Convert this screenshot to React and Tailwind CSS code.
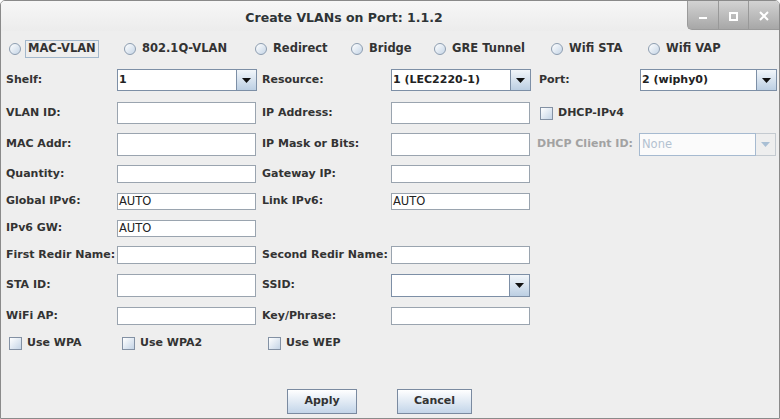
import React from "react";

const label = "font-bold text-[11px] text-[#333333] whitespace-nowrap";

function TextField({ value, w = "w-[139px]" }) {
  return (
    <div className={`${w} shrink-0 h-full bg-white border border-[#9aa4af] flex items-center pl-[1px] text-[11.5px] text-[#222] overflow-hidden`}>
      {value}
    </div>
  );
}

function Arrow({ disabled }) {
  return (
    <div className={`w-[20px] h-full flex items-center justify-center ${disabled ? "border border-l-0 border-[#c4cad0] bg-[#eeeeee]" : "border-l border-[#7d8fa6] bg-gradient-to-b from-[#f2f6fa] to-[#bccfe3]"}`}>
      <svg width="9" height="5" viewBox="0 0 9 5">
        <path d="M0 0h9L4.5 5z" fill={disabled ? "#a9bfd4" : "#111"} />
      </svg>
    </div>
  );
}

function Combo({ value, w = "w-[140px]" }) {
  return (
    <div className={`${w} shrink-0 h-full flex border border-[#7d8fa6] bg-white`}>
      <div className="flex-1 flex items-center pl-[1px] font-bold text-[11px] text-[#222]">{value}</div>
      <Arrow />
    </div>
  );
}

function DisabledCombo({ value, w }) {
  return (
    <div className={`${w} shrink-0 h-full flex`}>
      <div className="flex-1 flex items-center pl-[2px] border border-[#a6bad0] bg-[#fbfbfb] text-[11.5px] text-[#b3c2d1]">{value}</div>
      <Arrow disabled />
    </div>
  );
}

function Radio({ text, w, focus }) {
  return (
    <div className={`${w} shrink-0 flex items-center h-full`}>
      <span className="w-[12px] h-[12px] rounded-full border border-[#8d9db0] bg-gradient-to-br from-white to-[#c5d5e6]" />
      {focus ? (
        <span className="ml-[4px] h-[18px] px-[2px] flex items-center border border-[#a3b8cc] font-bold text-[11.5px] text-[#333]">{text}</span>
      ) : (
        <span className="ml-[6px] font-bold text-[11.5px] text-[#333]">{text}</span>
      )}
    </div>
  );
}

function Check({ text, w }) {
  return (
    <div className={`${w} shrink-0 flex items-center h-full`}>
      <span className="w-[13px] h-[13px] border border-[#8391a4] bg-gradient-to-br from-white to-[#c4d4e6]" />
      <span className={`ml-[5px] ${label}`}>{text}</span>
    </div>
  );
}

function Row({ h, mt, children }) {
  return <div className={`flex items-center ${h} ${mt}`}>{children}</div>;
}

function L1({ children }) {
  return <div className={`w-[116px] shrink-0 pl-[5px] ${label}`}>{children}</div>;
}
function L2({ children }) {
  return <div className={`w-[129px] shrink-0 ml-[6px] ${label}`}>{children}</div>;
}

export default function App() {
  return (
    <div className="w-[780px] h-[419px] bg-[#eeeeee] border border-[#8a8a8a] rounded-t-[5px] flex flex-col overflow-hidden font-['DejaVu_Sans']">
      {/* title bar */}
      <div className="h-[30px] shrink-0 flex bg-gradient-to-b from-[#f7f7f7] to-[#ececec]">
        <div className="flex-1 flex items-center justify-center pt-[5px] font-bold text-[12.5px] text-[#2e3436]">
          Create VLANs on Port: 1.1.2
        </div>
        <div className="flex h-[29px] rounded-bl-[5px] overflow-hidden bg-gradient-to-b from-[#d3d3d3] to-[#a7a7a7] border-l border-b border-[#9a9a9a]">
          <div className="w-[30px] flex items-end justify-center pb-[9px]">
            <svg width="9" height="3"><rect width="8" height="2" fill="#fff" /></svg>
          </div>
          <div className="w-[30px] flex items-center justify-center border-l border-[#999] pt-[2px]">
            <svg width="9" height="9"><rect x="1" y="1" width="7" height="7" fill="none" stroke="#fff" strokeWidth="2" /></svg>
          </div>
          <div className="w-[31px] flex items-center justify-center border-l border-[#999] pt-[2px]">
            <svg width="10" height="10"><path d="M1 1l8 8M9 1l-8 8" stroke="#fff" strokeWidth="2" /></svg>
          </div>
        </div>
      </div>

      {/* radio row */}
      <div className="flex h-[20px] mt-[8px] pl-[8px]">
        <Radio text="MAC-VLAN" w="w-[115px]" focus />
        <Radio text="802.1Q-VLAN" w="w-[131px]" />
        <Radio text="Redirect" w="w-[96px]" />
        <Radio text="Bridge" w="w-[83px]" />
        <Radio text="GRE Tunnel" w="w-[117px]" />
        <Radio text="Wifi STA" w="w-[97px]" />
        <Radio text="Wifi VAP" w="w-[100px]" />
      </div>

      <Row h="h-[22px]" mt="mt-[10px]">
        <L1>Shelf:</L1>
        <Combo value="1" />
        <div className={`w-[129px] shrink-0 ml-[5px] ${label}`}>Resource:</div>
        <Combo value="1 (LEC2220-1)" />
        <div className={`w-[101px] shrink-0 ml-[8px] ${label}`}>Port:</div>
        <Combo value="2 (wiphy0)" w="w-[137px]" />
      </Row>

      <Row h="h-[22px]" mt="mt-[11px]">
        <L1>VLAN ID:</L1>
        <TextField />
        <L2>IP Address:</L2>
        <TextField />
        <div className="ml-[10px]">
          <Check text="DHCP-IPv4" w="w-[100px]" />
        </div>
      </Row>

      <Row h="h-[23px]" mt="mt-[9px]">
        <L1>MAC Addr:</L1>
        <TextField />
        <L2>IP Mask or Bits:</L2>
        <TextField />
        <div className="w-[102px] shrink-0 ml-[7px] font-bold text-[11px] text-[#a2a2a2] whitespace-nowrap">DHCP Client ID:</div>
        <DisabledCombo value="None" w="w-[137px]" />
      </Row>

      <Row h="h-[18px]" mt="mt-[9px]">
        <L1>Quantity:</L1>
        <TextField />
        <L2>Gateway IP:</L2>
        <TextField />
      </Row>

      <Row h="h-[17px]" mt="mt-[10px]">
        <L1>Global IPv6:</L1>
        <TextField value="AUTO" />
        <L2>Link IPv6:</L2>
        <TextField value="AUTO" />
      </Row>

      <Row h="h-[17px]" mt="mt-[10px]">
        <L1>IPv6 GW:</L1>
        <TextField value="AUTO" />
      </Row>

      <Row h="h-[18px]" mt="mt-[9px]">
        <L1>First Redir Name:</L1>
        <TextField />
        <L2>Second Redir Name:</L2>
        <TextField />
      </Row>

      <Row h="h-[23px]" mt="mt-[10px]">
        <L1>STA ID:</L1>
        <TextField />
        <L2>SSID:</L2>
        <Combo value="" w="w-[139px]" />
      </Row>

      <Row h="h-[18px]" mt="mt-[10px]">
        <L1>WiFi AP:</L1>
        <TextField />
        <L2>Key/Phrase:</L2>
        <TextField />
      </Row>

      <div className="flex h-[13px] mt-[12px] pl-[8px]">
        <Check text="Use WPA" w="w-[113px]" />
        <Check text="Use WPA2" w="w-[146px]" />
        <Check text="Use WEP" w="w-[100px]" />
      </div>

      <div className="flex h-[25px] mt-[39px] pl-[286px] gap-[40px]">
        <button className="w-[70px] h-full border border-[#7a8aa0] bg-gradient-to-b from-white to-[#c3d5e9] font-bold text-[11px] text-[#333]">
          Apply
        </button>
        <button className="w-[75px] h-full border border-[#7a8aa0] bg-gradient-to-b from-white to-[#c3d5e9] font-bold text-[11px] text-[#333]">
          Cancel
        </button>
      </div>
    </div>
  );
}
